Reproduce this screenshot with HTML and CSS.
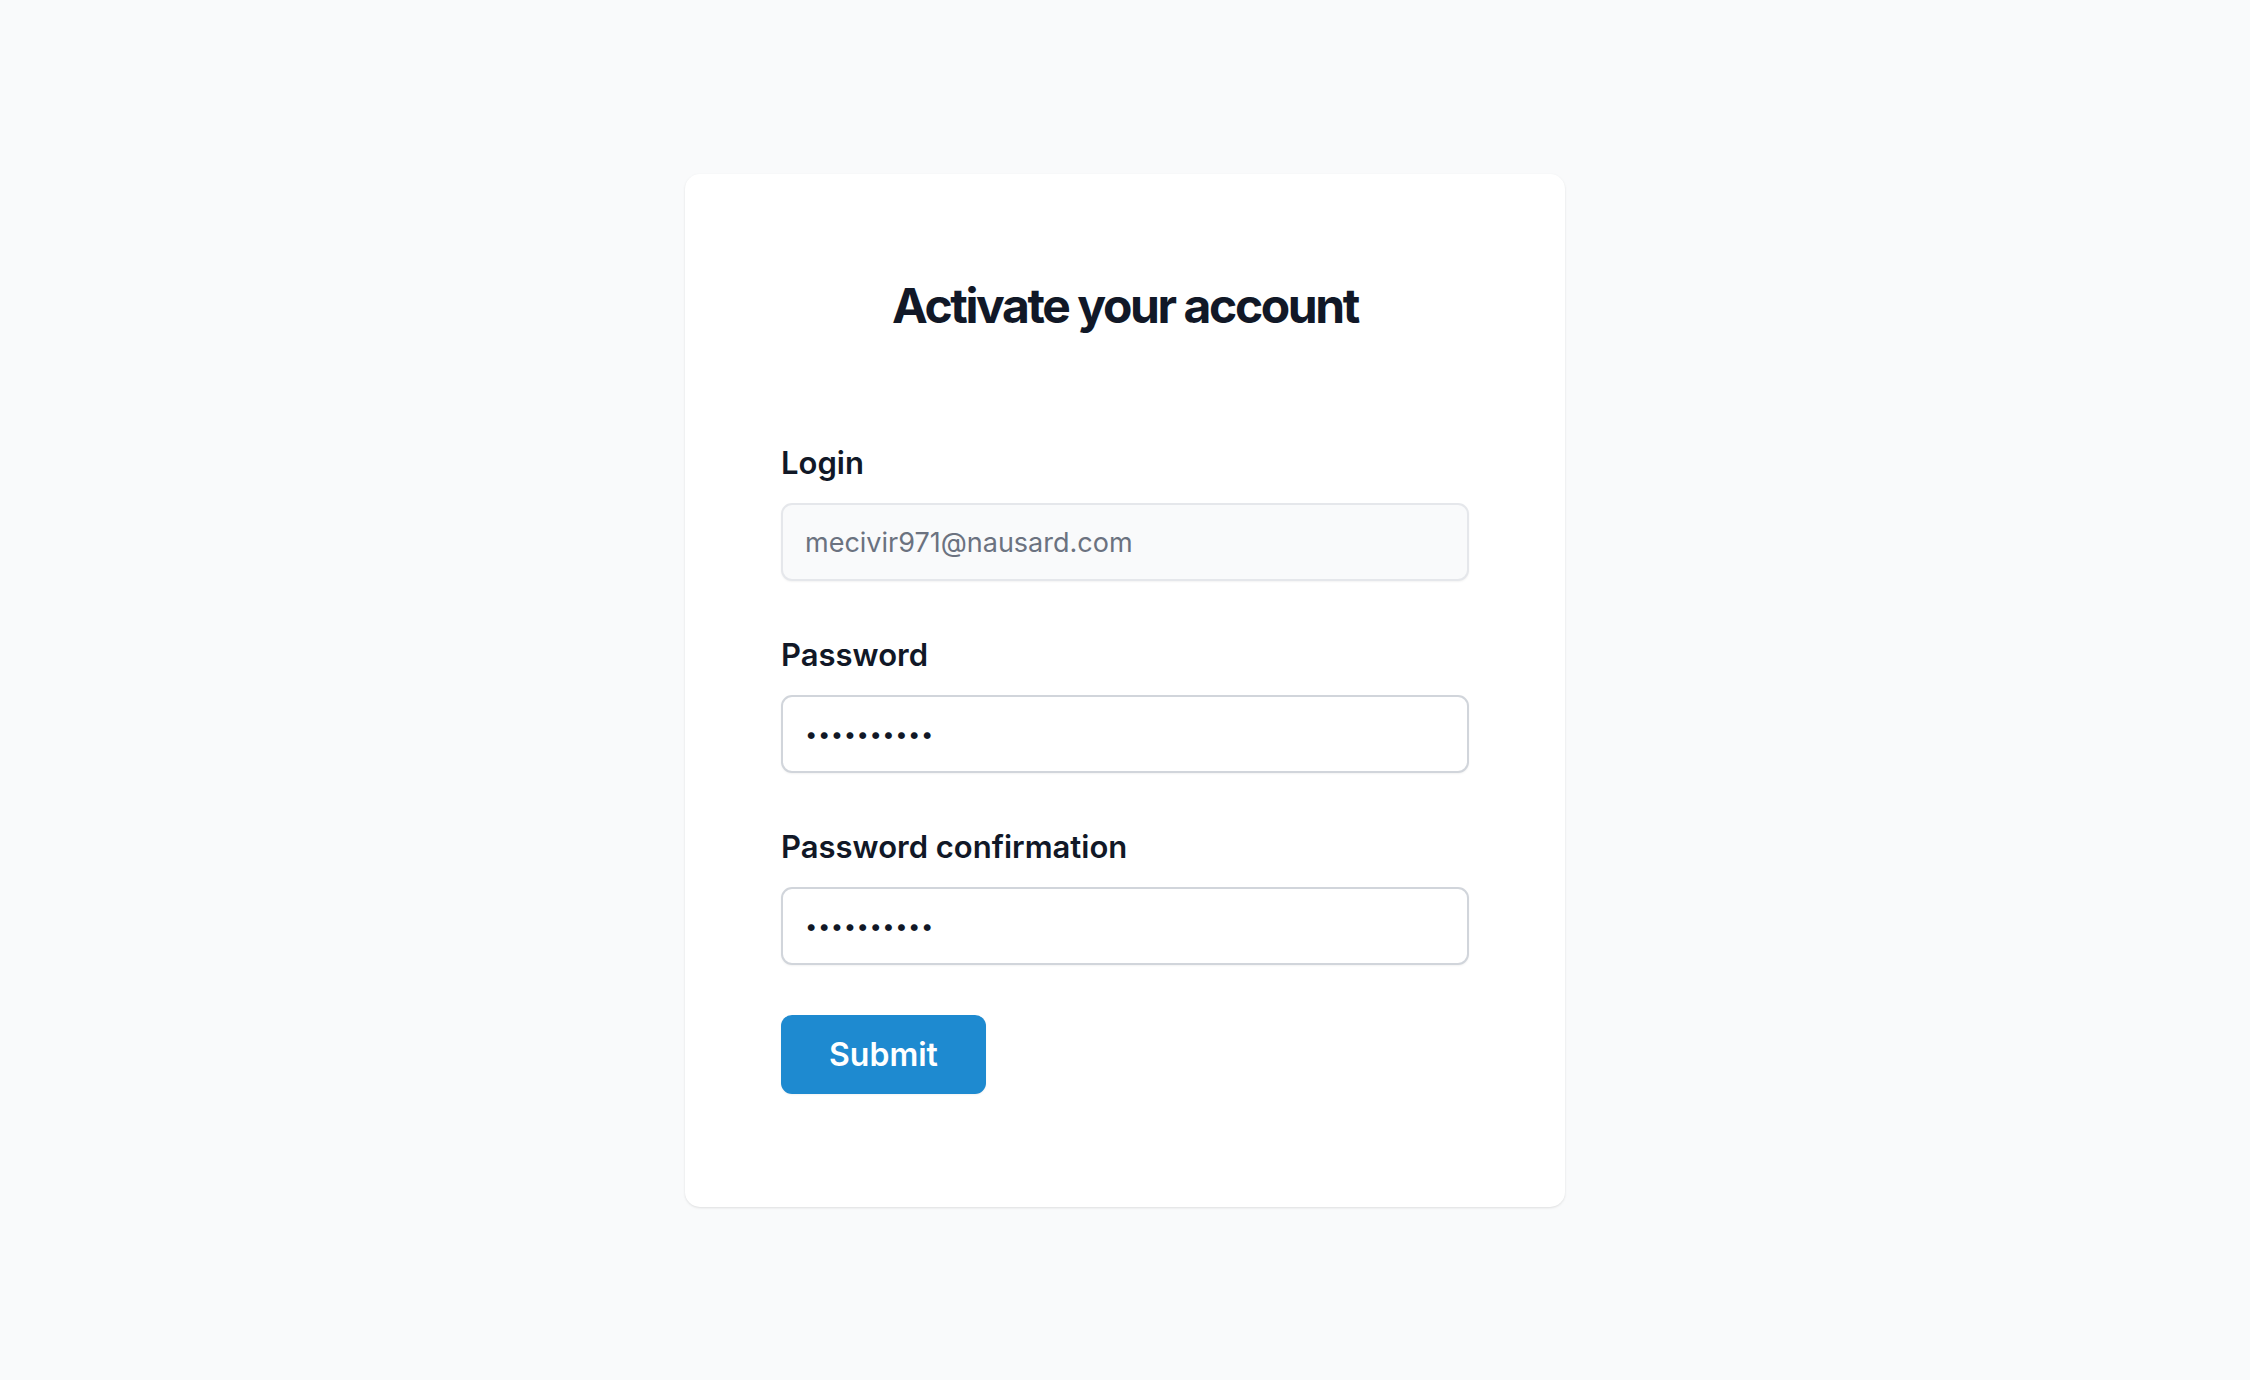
FILE: index.html
```html
<!DOCTYPE html>
<html lang="en">
<head>
<meta charset="utf-8">
<title>Activate your account</title>
<link rel="stylesheet" href="styles.css">
</head>
<body>
<main class="page">
  <section class="card">
    <h1 class="title">Activate your account</h1>
    <form class="form">
      <div class="field">
        <label class="label" for="login">Login</label>
        <input class="input input-disabled" id="login" type="text" value="mecivir971@nausard.com" readonly>
      </div>
      <div class="field">
        <label class="label" for="password">Password</label>
        <input class="input input-secret" id="password" type="password" value="1234567890">
      </div>
      <div class="field">
        <label class="label" for="password_confirmation">Password confirmation</label>
        <input class="input input-secret" id="password_confirmation" type="password" value="1234567890">
      </div>
      <div class="actions">
        <button class="button" type="button">Submit</button>
      </div>
    </form>
  </section>
</main>
</body>
</html>
```

FILE: styles.css
```css
* { box-sizing: border-box; }

html, body {
  margin: 0;
  padding: 0;
}

body {
  background: #f9fafb;
  font-family: Inter, "Noto Sans", "Liberation Sans", sans-serif;
  color: #111827;
}

.page {
  min-height: 1380px;
  display: flex;
  justify-content: center;
  align-items: flex-start;
  padding-top: 174px;
}

.card {
  width: 880px;
  background: #ffffff;
  border-radius: 15px;
  box-shadow: 0 1px 3px rgba(0, 0, 0, 0.08), 0 1px 2px rgba(0, 0, 0, 0.04);
  padding: 102px 96px 113px;
}

.title {
  margin: 0;
  text-align: center;
  font-size: 48px;
  line-height: 60px;
  font-weight: 700;
  letter-spacing: -0.05em;
  color: #111827;
}

.form {
  margin-top: 104px;
  display: flex;
  flex-direction: column;
  gap: 51px;
}

.field {
  display: flex;
  flex-direction: column;
  gap: 17px;
}

.label {
  font-size: 31px;
  line-height: 46px;
  font-weight: 600;
  color: #111827;
}

.input {
  height: 78px;
  width: 100%;
  border: 2px solid #d1d5db;
  border-radius: 11px;
  background: #ffffff;
  padding: 0 22px;
  font-family: Inter, "Noto Sans", "Liberation Sans", sans-serif;
  font-size: 27px;
  color: #111827;
  box-shadow: 0 1px 2px rgba(0, 0, 0, 0.05);
  outline: none;
}

.input-secret {
  font-size: 22px;
  letter-spacing: 0.5px;
}

.input-disabled {
  background: #f9fafb;
  border-color: #e5e7eb;
  color: #6b7280;
}

.actions {
  margin-top: -1px;
  display: flex;
}

.button {
  height: 79px;
  padding: 0 48px;
  border: none;
  border-radius: 11px;
  background: #1e8ad0;
  color: #ffffff;
  font-family: Inter, "Noto Sans", "Liberation Sans", sans-serif;
  font-size: 32px;
  font-weight: 600;
  box-shadow: 0 1px 2px rgba(0, 0, 0, 0.05);
  cursor: pointer;
}
```
